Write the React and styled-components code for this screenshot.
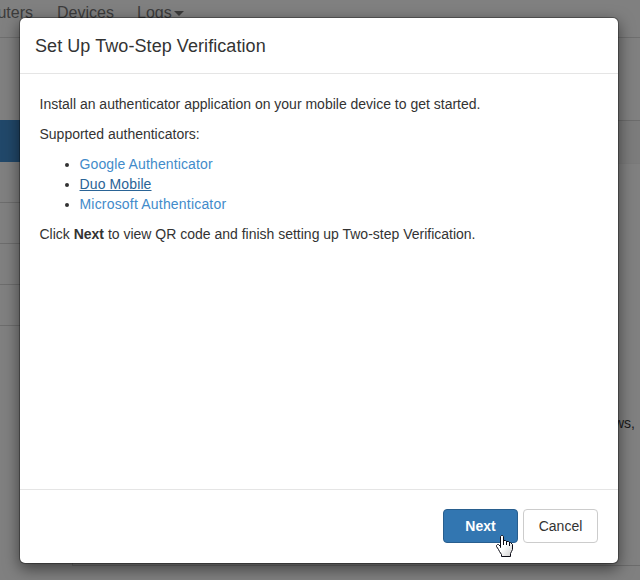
import React from "react";
import styled, { createGlobalStyle } from "styled-components";

const GlobalStyle = createGlobalStyle`
  * { box-sizing: border-box; }
  html, body { margin: 0; overflow: hidden; }
  body {
    background: #808080;
    color: #333;
    font: 14px/20px "Liberation Sans", Arial, sans-serif;
  }
`;

const Screen = styled.div`
  position: relative;
  width: 640px;
  height: 580px;
  overflow: hidden;
  background: #808080;
`;

const Page = styled.div`
  display: flex;
  flex-direction: column;
  height: 580px;
`;

const NavBar = styled.nav`
  display: flex;
  height: 38px;
  padding-top: 3px;
  border-bottom: 1px solid #6f6f6f;
  font-size: 16px;
  color: #3c3c3c;
`;

const NavItem = styled.span`
  flex: none;
  display: flex;
  width: ${(p) => p.$width}px;
  letter-spacing: ${(p) => p.$spacing || 0}px;
  white-space: nowrap;
`;

const ClippedNavItem = styled(NavItem)`
  justify-content: flex-end;
  margin-right: 24px;
`;

const Caret = styled.span`
  width: 0;
  height: 0;
  margin: 8px 0 0 2px;
  border: 5px solid transparent;
  border-top-color: #3c3c3c;
  border-bottom: 0;
`;

const Columns = styled.div`
  display: flex;
  flex: 1;
`;

const SideMenu = styled.div`
  width: 60px;
  padding-top: 82px;
`;

const SideItem = styled.div`
  height: ${(p) => (p.$active ? 42 : 41)}px;
  background: ${(p) => (p.$active ? "#21486a" : "transparent")};
  border-bottom: ${(p) => (p.$active ? "0" : "1px solid #6d6d6d")};
`;

const Content = styled.div`
  flex: 1;
  display: flex;
  flex-direction: column;
  padding-left: 12px;
`;

const ContentPanel = styled.div`
  height: 446px;
  margin-top: 82px;
  border: solid #6c6c6c;
  border-width: 1px 0 1px 1px;
`;

const PanelHeading = styled.div`
  height: 43px;
  background: #7c7c7c;
  border-bottom: 1px solid #7a7a7a;
`;

const PanelText = styled.div`
  padding: 249px 5px 0 0;
  text-align: right;
  color: #1a1a1a;
`;

const Modal = styled.section`
  position: absolute;
  left: 19px;
  top: 17px;
  display: flex;
  flex-direction: column;
  width: 600px;
  height: 547px;
  background: #fff;
  background-clip: padding-box;
  border: 1px solid rgba(0, 0, 0, 0.3);
  border-radius: 6px;
  box-shadow: 0 5px 15px rgba(0, 0, 0, 0.5);
`;

const ModalHeader = styled.header`
  height: 56px;
  padding: 15px;
  border-bottom: 1px solid #e5e5e5;
`;

const Title = styled.h4`
  margin: 0;
  font-size: 18px;
  font-weight: 400;
  line-height: 26px;
  letter-spacing: 0.07px;
`;

const ModalBody = styled.div`
  flex: 1;
  padding: 20px 19.5px;
`;

const Paragraph = styled.p`
  margin: 0 0 10px;
  white-space: nowrap;
  letter-spacing: -0.005px;
`;

const LinkList = styled.ul`
  margin: 0 0 10px;
  padding-left: 40px;
`;

const ProductLink = styled.a`
  color: ${(p) => (p.$hovered ? "#2a6496" : "#428bca")};
  text-decoration: ${(p) => (p.$hovered ? "underline" : "none")};
  letter-spacing: ${(p) => p.$spacing}px;
`;

const ModalFooter = styled.footer`
  display: flex;
  justify-content: flex-end;
  gap: 5px;
  height: 74px;
  padding: 19px 20px;
  border-top: 1px solid #e5e5e5;
`;

const Button = styled.button`
  width: 75px;
  height: 34px;
  padding: 0;
  border: 1px solid ${(p) => (p.$primary ? "#285e8e" : "#ccc")};
  border-radius: 4px;
  background: ${(p) => (p.$primary ? "#3276b1" : "#fff")};
  color: ${(p) => (p.$primary ? "#fff" : "#333")};
  font: ${(p) => (p.$primary ? 700 : 400)} 14px/20px "Liberation Sans", Arial, sans-serif;
`;

const Pointer = styled.svg`
  position: absolute;
  left: 496px;
  top: 535px;
`;

const authenticators = [
  { name: "Google Authenticator", spacing: 0.12 },
  { name: "Duo Mobile", spacing: 0.12, hovered: true },
  { name: "Microsoft Authenticator", spacing: 0.19 },
];

export default function App() {
  return (
    <Screen>
      <GlobalStyle />
      <Page>
        <NavBar>
          <ClippedNavItem $width={33}>uters</ClippedNavItem>
          <NavItem $width={80}>Devices</NavItem>
          <NavItem $width={60}>Logs<Caret /></NavItem>
        </NavBar>
        <Columns>
          <SideMenu>
            <SideItem $active />
            <SideItem />
            <SideItem />
            <SideItem />
            <SideItem />
          </SideMenu>
          <Content>
            <ContentPanel>
              <PanelHeading />
              <PanelText>ws,</PanelText>
            </ContentPanel>
          </Content>
        </Columns>
      </Page>
      <Modal role="dialog" aria-modal="true">
        <ModalHeader>
          <Title>Set Up Two-Step Verification</Title>
        </ModalHeader>
        <ModalBody>
          <Paragraph>Install an authenticator application on your mobile device to get started.</Paragraph>
          <Paragraph>Supported authenticators:</Paragraph>
          <LinkList>
            {authenticators.map((item) => (
              <li key={item.name}>
                <ProductLink $hovered={item.hovered} $spacing={item.spacing}>{item.name}</ProductLink>
              </li>
            ))}
          </LinkList>
          <Paragraph>
            Click <b>Next</b> to view QR code and finish setting up Two-step Verification.
          </Paragraph>
        </ModalBody>
        <ModalFooter>
          <Button $primary>Next</Button>
          <Button>Cancel</Button>
        </ModalFooter>
      </Modal>
      <Pointer width="17" height="22" viewBox="0 0 17 22" aria-hidden="true">
        <defs>
          <linearGradient id="hand" x1="0" y1="0" x2="1" y2="1">
            <stop offset="0.5" stopColor="#fff" />
            <stop offset="1" stopColor="#ccc" />
          </linearGradient>
        </defs>
        <path
          d="M4.5 12.5V1.5L5.5 .5H6.5L7.5 1.5V5.5H9.5L10.5 6.5H12.5L13.5 7.5H14.5L16.5 9.5V14.5L15.5 16.5L14.5 18.5V21.5H5.5V19.5L3.5 16.5L2.5 14.5L.5 11.5V10.5L1.5 9.5H2.5L4.5 11.5Z"
          fill="url(#hand)"
          stroke="#0a0a14"
        />
        <path d="M7.5 5V10M10.5 6V10M13.5 7V11" fill="none" stroke="#0a0a14" />
      </Pointer>
    </Screen>
  );
}
